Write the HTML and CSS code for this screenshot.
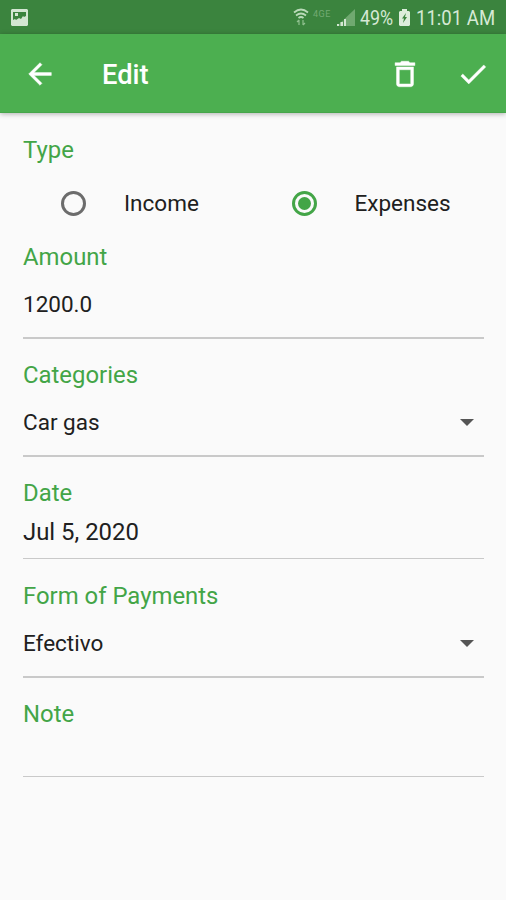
FILE: index.html
```html
<!DOCTYPE html>
<html lang="en">
<head>
<meta charset="utf-8">
<title>Edit</title>
<link rel="stylesheet" href="styles.css">
</head>
<body>
<div class="status">
  <svg class="picture" width="17" height="17" viewBox="0 0 17 17"><path fill="#d3e6d2" fill-rule="evenodd" d="M1 0h15l1 1v15l-1 1H1l-1-1V1zM2 3v8l2-1 1 1 3-2 2 1 2-3 1 1 2-1V3zM4 4h3v3H4z"/></svg>
  <svg class="wifi" width="16" height="18" viewBox="0 0 16 18" fill="none" stroke="#b9dab8" stroke-width="1.7"><path d="M1 4.5Q8-1.5 15 4.5M3 7.5Q8 3.5 13 7.5M5.5 10Q8 8 10.500 10"/><path d="M6 12v5M4 14l2-2M10 12v5M10 17l2-2" stroke-width="1.2" stroke="#8fc08e"/></svg>
  <span class="lte">4GE</span>
  <svg class="signal" width="18" height="17" viewBox="0 0 18 17"><path fill="#70a970" d="M18 0v17H0z"/><path fill="#3a833d" d="M2.500 11h1v6h-1zM6 8h1v9H6z" opacity=".6"/><path fill="#d3e6d2" d="M0 15h2v2H0zM3.500 13H6v4H3.500zM7 10h2v7H7z"/></svg>
  <span class="battery-level">49%</span>
  <svg class="battery" width="11" height="17" viewBox="0 0 11 17"><path fill="#dceddb" fill-rule="evenodd" d="M3 0h5v2h2l1 1v13l-1 1H1l-1-1V3l1-1h2zM7 4 3 9.500h2L4 14l4-6H6z"/></svg>
  <span class="clock">11:01 AM</span>
</div>
<header class="bar">
  <svg class="back" width="34" height="34" viewBox="0 0 24 24"><path fill="#fff" stroke="#fff" stroke-width=".3" d="M20 11H7.830l5.590-5.590L12 4l-8 8 8 8 1.410-1.410L7.830 13H20z"/></svg>
  <h1>Edit</h1>
  <svg class="delete" width="34" height="34" viewBox="0 0 24 24"><path fill="#fff" stroke="#fff" stroke-width=".3" d="M6 19c0 1.100.9 2 2 2h8c1.100 0 2-.9 2-2V7H6zM8 9h8v10H8zM15.500 4l-1-1h-5l-1 1H5v2h14V4z"/></svg>
  <svg class="done" width="34" height="34" viewBox="0 0 24 24"><path fill="#fff" stroke="#fff" stroke-width=".3" d="M9 16.170 4.830 12l-1.420 1.410L9 19 21 7l-1.410-1.410z"/></svg>
</header>
<main>
  <h2>Type</h2>
  <div class="radios">
    <label class="option"><span class="radio"></span><span class="name">Income</span></label>
    <label class="option"><span class="radio checked"></span><span class="name">Expenses</span></label>
  </div>
  <section class="field"><h2>Amount</h2><div class="value"><span>1200.0</span></div></section>
  <section class="field"><h2>Categories</h2><div class="value"><span>Car gas</span><i class="caret"></i></div></section>
  <section class="field date"><h2>Date</h2><div class="value"><span>Jul 5, 2020</span></div></section>
  <section class="field payment"><h2>Form of Payments</h2><div class="value"><span>Efectivo</span><i class="caret"></i></div></section>
  <section class="field note"><h2>Note</h2><div class="value"></div></section>
</main>
</body>
</html>
```
FILE: styles.css
```css
* { box-sizing: border-box; }
body {
  margin: 0;
  height: 900px;
  overflow: hidden;
  background: #fafafa;
  color: #202020;
  font-family: Roboto, "Liberation Sans", sans-serif;
}
svg { display: block; flex: none; }
h1, h2 { margin: 0; white-space: nowrap; }
.status {
  display: flex;
  align-items: center;
  height: 34px;
  padding-left: 11px;
  background: #3b843e;
  color: #d6e9d5;
  white-space: nowrap;
}
.wifi { margin-left: 265px; }
.lte { width: 20px; margin: -7px 0 0 4px; font-size: 9px; color: #73aa73; letter-spacing: .5px; }
.signal { margin-left: 4px; }
.battery-level, .clock {
  font-size: 20.5px;
  line-height: 24px;
  transform-origin: left;
  margin-top: 2px;
}
.battery-level { width: 34px; margin-left: 5px; transform: scaleX(.87); }
.battery { margin-left: 5px; }
.clock { margin-left: 6px; transform: scaleX(.905); }
.bar {
  position: relative;
  display: flex;
  align-items: center;
  height: 79px;
  padding-left: 23px;
  background: #4caf50;
  border-bottom: 1px solid #46a64a;
  box-shadow: 0 1px 5px rgba(0, 0, 0, .3);
}
.back, .delete, .done { margin-top: 1px; }
h1 { width: 286px; margin: 4px 0 0 45px; color: #fff; font-size: 27.3px; font-weight: 500; line-height: 32px; }
.done { margin-left: 34px; }
main { padding: 23px 22px 0 23px; }
h2 { color: #43a547; font-size: 23.9px; font-weight: 400; line-height: 28px; }
.radios { display: grid; grid-template-columns: 1fr 1fr; height: 79px; }
.option { display: flex; align-items: center; padding-left: 38px; font-size: 22.5px; }
.name { margin-top: -2px; }
.radio { width: 25px; height: 25px; margin: -1px 38px 0 0; border: 3px solid #6c6c6c; border-radius: 50%; }
.checked { padding: 3px; border-color: #43a547; background: #43a547 content-box; }
.value {
  display: flex;
  align-items: center;
  justify-content: space-between;
  height: 68px;
  border-bottom: 2px solid #c9c9c9;
  font-size: 22.5px;
}
.field + .field { margin-top: 22px; }
.caret { margin-right: 10px; border: solid transparent; border-width: 7px 7px 0; border-top-color: #555; }
.date .value { height: 52px; padding-bottom: 2px; border-bottom-width: 1px; font-size: 23.9px; }
.field.payment { margin-top: 23px; }
.note .value { height: 49px; border-bottom-width: 1px; }
```
